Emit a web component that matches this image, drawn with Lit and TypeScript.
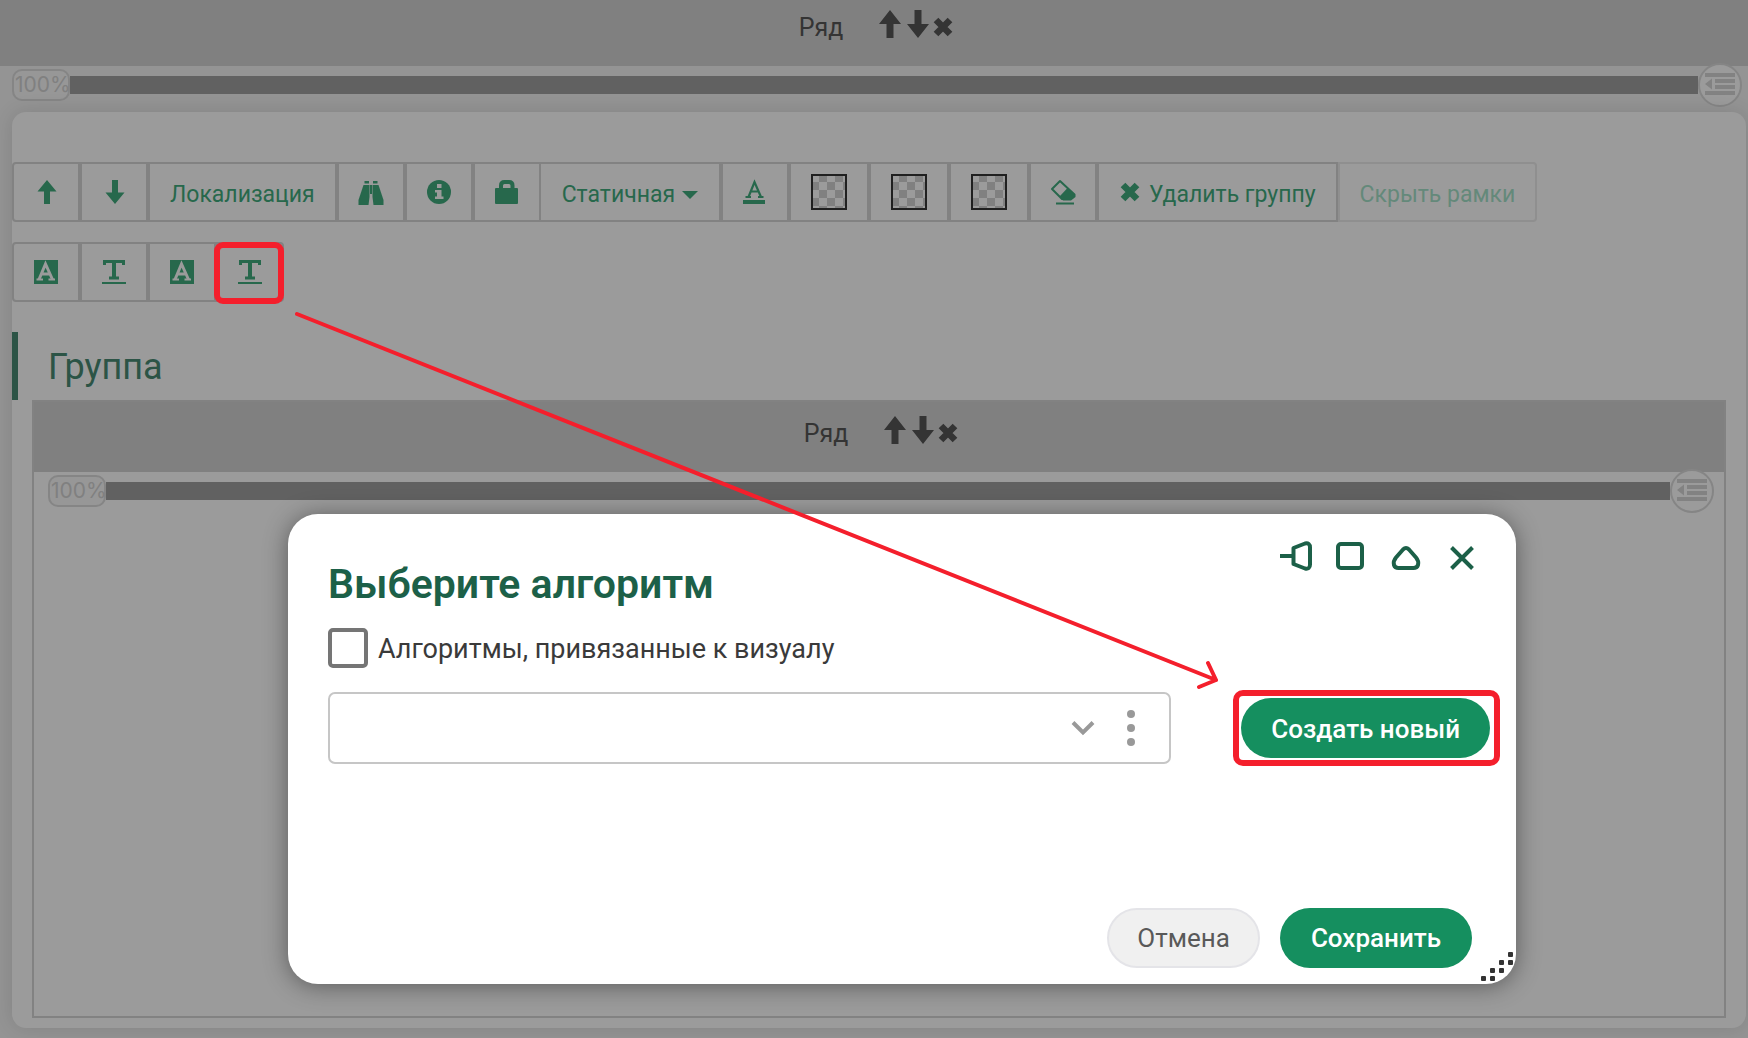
import { LitElement, html, css, svg, nothing, TemplateResult } from 'lit';
import { customElement, property, state } from 'lit/decorators.js';
import { classMap } from 'lit/directives/class-map.js';

const icon = (w: number, h: number, body: TemplateResult) =>
  html`<svg width=${w} height=${h} viewBox="0 0 ${w} ${h}" aria-hidden="true">${body}</svg>`;

const icons: Record<string, TemplateResult> = {
  up: icon(24, 24, svg`<path fill="currentColor" d="M13 0 L22.500 11.500 H16 V24 H10 V11.500 H3.500 Z"/>`),
  down: icon(24, 24, svg`<path fill="currentColor" d="M13 24 L22.500 12.500 H16 V0 H10 V12.500 H3.500 Z"/>`),
  binoculars: icon(26, 26, svg`<g fill="currentColor">
    <path d="M5.500 6 H11.500 V18 L10.500 26 H0.500 V21 Z"/><path d="M20.500 6 H14.500 V18 L15.500 26 H25.500 V21 Z"/>
    <rect x="12" y="6" width="2" height="9"/><rect x="6.500" y="2" width="4.500" height="2.500"/><rect x="15" y="2" width="4.500" height="2.500"/></g>`),
  info: icon(24, 24, svg`<circle cx="12" cy="12" r="12" fill="currentColor"/>
    <g fill="#9b9b9b"><rect x="10" y="4" width="4.500" height="4"/><path d="M8 10 H14.500 V16.500 H16.500 V19 H8 V16.500 H10 V12.500 H8 Z"/></g>`),
  lock: icon(24, 24, svg`<rect x="0" y="8" width="23" height="16" rx="1" fill="currentColor"/>
    <path d="M6 10 V5.500 Q6 2 9.500 2 H14 Q17.500 2 17.500 5.500 V10" fill="none" stroke="currentColor" stroke-width="4"/>`),
  fontColor: icon(24, 24, svg`<rect y="20" width="22" height="4" fill="currentColor"/>
    <path d="M5.500 17 L11.500 2 L18 17 M8 11.500 H15.500 M2.500 17 H8 M15 17 H20.500" fill="none" stroke="currentColor" stroke-width="2.200"/>`),
  eraser: icon(26, 26, svg`<path d="M10 2 L2 10 L12 20 H18 L24.500 15.500 Z" fill="none" stroke="currentColor" stroke-width="2" stroke-linejoin="round"/>
    <path d="M17.500 9 L25.500 16 V18 L21 21.500 H13 L9.500 17.500 Z" fill="currentColor"/><rect x="6" y="23.500" width="18" height="2" fill="currentColor"/>`),
  cross: icon(20, 20, svg`<path d="M3 3 L17 17 M17 3 L3 17" stroke="currentColor" stroke-width="6.600"/>`),
  fillA: icon(24, 24, svg`<rect width="24" height="24" fill="currentColor"/>
    <path d="M5 19.500 L11.500 4 L18.500 19.500 M7.500 14 H16" fill="none" stroke="#9b9b9b" stroke-width="3"/>
    <path d="M2.500 19.500 H9 M14.500 19.500 H21" fill="none" stroke="#9b9b9b" stroke-width="2"/>`),
  textT: icon(24, 26, svg`<path d="M2.500 6 V2.500 H21.500 V6 M7 19 H17" fill="none" stroke="currentColor" stroke-width="3"/>
    <path d="M12 2 V19" fill="none" stroke="currentColor" stroke-width="4"/>
    <rect y="23" width="24" height="2" fill="currentColor"/>`),
  rowUp: icon(22, 28, svg`<path fill="currentColor" d="M11 0 L22 14 H14.500 V28 H7.500 V14 H0 Z"/>`),
  rowDown: icon(22, 28, svg`<path fill="currentColor" d="M11 28 L22 14 H14.500 V0 H7.500 V14 H0 Z"/>`),
  outdent: icon(30, 24, svg`<path fill="currentColor" d="M0 0 H30 V4 H0 Z M10 6 H30 V10 H10 Z M10 12 H30 V16 H10 Z M0 18 H30 V22 H0 Z M0 11 L7 5.500 V16.500 Z"/>`),
  pin: icon(32, 32, svg`<path d="M1 16 H14 M14.500 8 L26 3.500 Q31 2.500 31 7.500 V24.500 Q31 29.500 26 28.500 L14.500 24 Z" fill="none" stroke="currentColor" stroke-width="4" stroke-linejoin="round" transform="translate(1 0)"/>`),
  square: icon(32, 32, svg`<rect x="4" y="4" width="24" height="24" rx="3" fill="none" stroke="currentColor" stroke-width="4"/>`),
  triangle: icon(32, 32, svg`<path d="M13 9.500 Q16 6.500 19 9.500 L26 17.500 Q29 21 28 25 Q27 28 23.500 28 H8.500 Q5 28 4 25 Q3 21 6 17.500 Z" fill="none" stroke="currentColor" stroke-width="4"/>`),
  close: icon(32, 32, svg`<path d="M5.500 7.500 L26.500 28.500 M26.500 7.500 L5.500 28.500" stroke="currentColor" stroke-width="4"/>`),
  chevron: icon(24, 16, svg`<path d="M2 2.500 L12 12.500 L22 2.500" fill="none" stroke="currentColor" stroke-width="4"/>`),
  dots: icon(12, 36, svg`<g fill="currentColor"><circle cx="6" cy="4" r="4"/><circle cx="6" cy="18" r="4"/><circle cx="6" cy="32" r="4"/></g>`),
};

const base = css`
  *, *::before, *::after { box-sizing: border-box; }
  button, select, input { font: inherit; color: inherit; margin: 0; }
  button { padding: 0; border: 0; background: none; cursor: pointer; }
  svg { display: block; flex: none; overflow: visible; }
`;

interface Tool {
  label: string;
  icon?: string;
  text?: boolean;
  swatch?: boolean;
  menu?: boolean;
  disabled?: boolean;
  marked?: boolean;
}

const mainTools: Tool[] = [
  { label: 'Вверх', icon: 'up' },
  { label: 'Вниз', icon: 'down' },
  { label: 'Локализация', text: true },
  { label: 'Поиск', icon: 'binoculars' },
  { label: 'Информация', icon: 'info' },
  { label: 'Блокировка', icon: 'lock' },
  { label: 'Статичная', text: true, menu: true },
  { label: 'Цвет текста', icon: 'fontColor' },
  { label: 'Цвет фона', swatch: true },
  { label: 'Цвет рамки', swatch: true },
  { label: 'Цвет заголовка', swatch: true },
  { label: 'Очистить', icon: 'eraser' },
  { label: 'Удалить группу', icon: 'cross', text: true },
  { label: 'Скрыть рамки', text: true, disabled: true },
];

const algorithmTools: Tool[] = [
  { label: 'Фон', icon: 'fillA' },
  { label: 'Текст', icon: 'textT' },
  { label: 'Фон по алгоритму', icon: 'fillA' },
  { label: 'Текст по алгоритму', icon: 'textT', marked: true },
];

@customElement('tool-group')
export class ToolGroup extends LitElement {
  @property({ attribute: false }) tools: Tool[] = [];

  static styles = [base, css`
    :host { display: flex; }
    .tool {
      position: relative;
      display: flex; align-items: center; justify-content: center; gap: 8px;
      width: 68px; height: 60px;
      border: 2px solid #828282;
      color: #27684c;
      font-size: 23px;
      white-space: nowrap;
    }
    .tool:first-child { border-radius: 4px 0 0 4px; }
    .tool:last-child { border-radius: 0 4px 4px 0; }
    .text { width: auto; padding: 5px 20px 0; }
    .text svg { margin: 0 1px 5px; }
    .menu { border-left: 0; gap: 7px; padding: 5px 21px 0; }
    .swatch { width: 80px; }
    .chip {
      width: 36px; height: 36px;
      border: 2px solid #202020;
      background: repeating-conic-gradient(#808080 0 25%, #9b9b9b 0 50%) -2px -2px / 16px 16px;
    }
    .caret { border: 8px solid transparent; border-top-color: currentColor; border-bottom: 0; }
    .disabled { color: #64897a; border-color: #8f8f8f; }
    .frame {
      position: absolute; inset: -2px -2px -4px -4px;
      border: 6px solid #f41f2c; border-radius: 9px;
    }
  `];

  render() {
    return this.tools.map((t) => html`
      <button
        class=${classMap({ tool: true, text: !!t.text, menu: !!t.menu, swatch: !!t.swatch, disabled: !!t.disabled })}
        ?disabled=${t.disabled} aria-label=${t.label}>
        ${t.icon ? icons[t.icon] : nothing}
        ${t.swatch ? html`<span class="chip"></span>` : nothing}
        ${t.text ? html`<span>${t.label}</span>` : nothing}
        ${t.menu ? html`<span class="caret"></span>` : nothing}
        ${t.marked ? html`<span class="frame"></span>` : nothing}
      </button>`);
  }
}

@customElement('layout-row')
export class LayoutRow extends LitElement {
  static styles = [base, css`
    :host { display: flex; flex-direction: column; }
    .head {
      display: flex; align-items: center; justify-content: center;
      min-height: 66px; padding: 0 0 12px 4px;
      background: #808080; color: #343434;
      font-size: 25px;
    }
    .name { margin-right: 36px; }
    .actions { display: flex; align-items: center; gap: 6px; margin-bottom: 6px; }
    .actions .remove { padding-top: 6px; margin-left: -2px; }
    .scale { display: flex; align-items: center; height: 38px; padding: 0 6px 0 12px; }
    .percent {
      width: 58px; height: 32px; padding-left: 1px; flex: none;
      border: 2px solid #858585; border-radius: 10px;
      background: #979797; color: #808080;
      font: 21px/28px Inter, sans-serif;
    }
    .bar { flex: 1; height: 18px; background: #616161; }
    .outdent {
      display: grid; place-items: center; flex: none;
      width: 44px; height: 44px; margin: -3px 0;
      border: 2px solid #858585; border-radius: 50%;
      background: #9b9b9b; color: #828282;
    }
    :host([nested]) .head { min-height: 70px; padding-bottom: 8px; }
    :host([nested]) .scale { padding: 0 10px 0 14px; }
  `];

  render() {
    return html`
      <div class="head">
        <span class="name">Ряд</span>
        <div class="actions">
          <button aria-label="Поднять ряд">${icons.rowUp}</button>
          <button aria-label="Опустить ряд">${icons.rowDown}</button>
          <button class="remove" aria-label="Удалить ряд">${icons.cross}</button>
        </div>
      </div>
      <div class="scale">
        <span class="percent">100%</span>
        <div class="bar"></div>
        <button class="outdent" aria-label="Отступ">${icons.outdent}</button>
      </div>
      <slot></slot>`;
  }
}

@customElement('algorithm-dialog')
export class AlgorithmDialog extends LitElement {
  @state() private bound = false;

  static styles = [base, css`
    :host {
      display: flex; flex-direction: column;
      min-height: 470px; padding: 24px 26px 16px 40px;
      border-radius: 30px; overflow: hidden;
      background: #fff; color: #3a3a3a;
      font-size: 26px;
      box-shadow: 0 2px 24px rgba(0, 0, 0, .42);
    }
    header { display: flex; justify-content: space-between; align-items: flex-start; }
    h2 { margin: 22px 0 0; font-size: 41px; line-height: 48px; font-weight: 600; color: #1c6048; }
    .controls { display: flex; color: #1c6048; }
    .controls button { display: grid; place-items: center; width: 56px; height: 36px; }
    .check { display: flex; align-items: center; gap: 10px; margin-top: 20px; font-size: 27px; line-height: 40px; align-self: flex-start; }
    .check span { padding-top: 2px; line-height: 38px; }
    .check input {
      appearance: none; width: 40px; height: 40px;
      border: 4px solid #757575; border-radius: 5px; background: #fff;
    }
    .check input:checked { background: #158f5f; }
    .pick { display: flex; align-items: center; gap: 70px; margin-top: 24px; }
    .combo {
      flex: 1; display: grid; grid-template-columns: 1fr 24px 42px 32px; align-items: center;
      height: 72px; border: 2px solid #c6c6c6; border-radius: 7px; color: #999;
    }
    .combo select {
      grid-area: 1 / 1 / 2 / -1; width: 100%; height: 68px; padding: 0 20px;
      appearance: none; border: 0; background: none;
    }
    .combo > svg { grid-area: 1 / 2; pointer-events: none; }
    .combo button { grid-area: 1 / 3; justify-self: end; }
    .create { position: relative; }
    .frame {
      position: absolute; inset: -8px -10px -8px -8px;
      border: 6px solid #f41f2c; border-radius: 10px; pointer-events: none;
    }
    .pill { height: 60px; padding: 1px 30px 0; border-radius: 30px; white-space: nowrap; }
    .primary { background: #158f5f; color: #fff; font-weight: 500; }
    .secondary { border: 2px solid #e4e4e8; background: #f0f0f0; color: #595959; }
    footer { display: flex; justify-content: flex-end; gap: 20px; margin: auto 18px 0 0; }
    footer .secondary { padding: 0 28px; }
    footer .primary { padding: 0 31px; }
    .grip { position: absolute; right: 0; bottom: 0; color: #333; }
  `];

  render() {
    const gripDots = [[26, 2], [17, 10], [26, 10], [8, 18], [17, 18], [-1, 26], [8, 26]];
    return html`
      <header>
        <h2>Выберите алгоритм</h2>
        <div class="controls">
          <button aria-label="Закрепить">${icons.pin}</button>
          <button aria-label="Развернуть">${icons.square}</button>
          <button aria-label="Свернуть">${icons.triangle}</button>
          <button aria-label="Закрыть">${icons.close}</button>
        </div>
      </header>
      <label class="check">
        <input type="checkbox" .checked=${this.bound}
          @change=${(e: Event) => (this.bound = (e.target as HTMLInputElement).checked)} />
        <span>Алгоритмы, привязанные к визуалу</span>
      </label>
      <div class="pick">
        <div class="combo">
          <select aria-label="Алгоритм"><option></option></select>
          ${icons.chevron}
          <button aria-label="Ещё">${icons.dots}</button>
        </div>
        <div class="create">
          <button class="pill primary">Создать новый</button>
          <span class="frame"></span>
        </div>
      </div>
      <footer>
        <button class="pill secondary">Отмена</button>
        <button class="pill primary">Сохранить</button>
      </footer>
      <svg class="grip" width="34" height="34" viewBox="0 0 34 34" aria-hidden="true">
        ${gripDots.map(([x, y]) => svg`<rect x=${x} y=${y} width="5" height="5" rx="1" fill="currentColor"/>`)}
      </svg>`;
  }
}

@customElement('app-root')
export class AppRoot extends LitElement {
  static styles = [base, css`
    :host {
      position: relative;
      display: flex; flex-direction: column;
      min-height: 100vh;
      background: #949494;
      font-family: Roboto, "Liberation Sans", sans-serif;
    }
    .outer { flex: 1; }
    .card {
      flex: 1; display: flex; flex-direction: column;
      margin: 8px 2px 10px 12px; padding-top: 50px;
      border-radius: 14px; background: #9b9b9b;
      box-shadow: 0 0 20px rgba(0, 0, 0, .12);
    }
    .tools { display: flex; flex-wrap: wrap; gap: 20px; }
    h3 {
      margin: 30px 0 0; padding: 2px 0 0 30px;
      border-left: 6px solid #2c5446; color: #2c5446;
      font-size: 36px; line-height: 66px; font-weight: 400;
    }
    .inner { flex: 1; margin: 0 20px 10px; border: 2px solid #828282; }
    .dialog { position: absolute; top: 514px; left: 288px; right: 232px; }
    .arrow { position: absolute; top: 312px; left: 295px; pointer-events: none; }
  `];

  render() {
    return html`
      <layout-row class="outer">
        <section class="card">
          <div class="tools">
            <tool-group .tools=${mainTools}></tool-group>
            <tool-group .tools=${algorithmTools}></tool-group>
          </div>
          <h3>Группа</h3>
          <layout-row class="inner" nested></layout-row>
        </section>
      </layout-row>
      <algorithm-dialog class="dialog" role="dialog" aria-label="Выберите алгоритм"></algorithm-dialog>
      <svg class="arrow" width="928" height="380" viewBox="0 0 928 380" aria-hidden="true">
        <path d="M2 2 L921 368 M913 351 L921 368 L904 375" fill="none" stroke="#f41f2c" stroke-width="4" stroke-linecap="round" stroke-linejoin="round"/>
      </svg>`;
  }
}
